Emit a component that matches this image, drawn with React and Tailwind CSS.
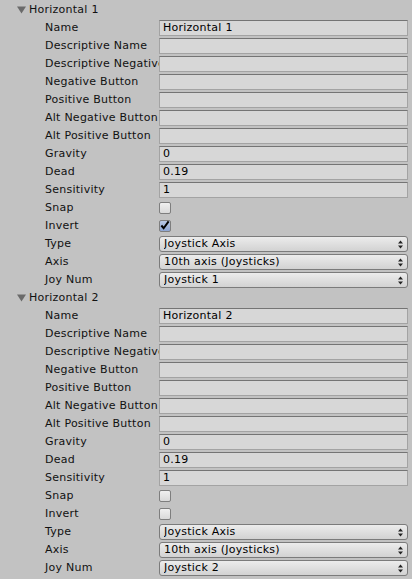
import React from "react";

const textFields = [
  "Name",
  "Descriptive Name",
  "Descriptive Negative Name",
  "Negative Button",
  "Positive Button",
  "Alt Negative Button",
  "Alt Positive Button",
];

function TextField({ value }) {
  return (
    <div className="flex-1 h-[16px] bg-[#d7d7d7] border border-[#a3a3a3] border-t-[#747474] pl-[3px] leading-[14px] text-black overflow-hidden whitespace-nowrap">
      {value}
    </div>
  );
}

function Checkbox({ checked }) {
  return (
    <div
      className={`w-[12px] h-[12px] rounded-[2px] border border-[#7e7e7e] flex items-center justify-center ${
        checked ? "bg-gradient-to-b from-[#b9c9e6] to-[#8ea6d2]" : "bg-gradient-to-b from-[#f0f0f0] to-[#d9d9d9]"
      }`}
    >
      {checked && (
        <svg width="11" height="11" viewBox="0 0 11 11" className="-mt-[1px]">
          <path d="M1.5 5.5 L4 8.5 L9.5 1" fill="none" stroke="#000" strokeWidth="2.2" />
        </svg>
      )}
    </div>
  );
}

function Dropdown({ value }) {
  return (
    <div className="flex-1 h-[16px] rounded-[3px] border border-[#7b7b7b] bg-gradient-to-b from-[#ececec] to-[#d2d2d2] flex items-center pl-[4px] pr-[4px] leading-[14px] text-black">
      <span className="flex-1 whitespace-nowrap overflow-hidden">{value}</span>
      <svg width="5" height="9" viewBox="0 0 5 9">
        <path d="M2.5 0.5 L5 3.5 L0 3.5 Z" fill="#222" />
        <path d="M2.5 8.5 L5 5.5 L0 5.5 Z" fill="#222" />
      </svg>
    </div>
  );
}

function Row({ label, children }) {
  return (
    <div className="flex items-center h-[18px]">
      <div className="w-[159px] shrink-0 pl-[45px] overflow-hidden whitespace-nowrap">{label}</div>
      <div className="flex-1 flex items-center pr-[4px]">{children}</div>
    </div>
  );
}

function AxisBlock({ name, invert, joy }) {
  return (
    <div>
      <div className="flex items-center h-[18px]">
        <svg width="9" height="8" viewBox="0 0 9 8" className="ml-[17px] mr-[3px]">
          <path d="M0 0.5 L9 0.5 L4.5 7.5 Z" fill="#6a6a6a" />
        </svg>
        <span>{name}</span>
      </div>
      {textFields.map((f) => (
        <Row key={f} label={f}>
          <TextField value={f === "Name" ? name : ""} />
        </Row>
      ))}
      <Row label="Gravity">
        <TextField value="0" />
      </Row>
      <Row label="Dead">
        <TextField value="0.19" />
      </Row>
      <Row label="Sensitivity">
        <TextField value="1" />
      </Row>
      <Row label="Snap">
        <Checkbox checked={false} />
      </Row>
      <Row label="Invert">
        <Checkbox checked={invert} />
      </Row>
      <Row label="Type">
        <Dropdown value="Joystick Axis" />
      </Row>
      <Row label="Axis">
        <Dropdown value="10th axis (Joysticks)" />
      </Row>
      <Row label="Joy Num">
        <Dropdown value={joy} />
      </Row>
    </div>
  );
}

export default function App() {
  return (
    <div
      className="w-[412px] h-[579px] pt-[1px] bg-[#c2c2c2] text-[11px] tracking-[0.25px] text-[#111] overflow-hidden"
      style={{ fontFamily: '"DejaVu Sans", sans-serif' }}
    >
      <AxisBlock name="Horizontal 1" invert={true} joy="Joystick 1" />
      <AxisBlock name="Horizontal 2" invert={false} joy="Joystick 2" />
    </div>
  );
}
